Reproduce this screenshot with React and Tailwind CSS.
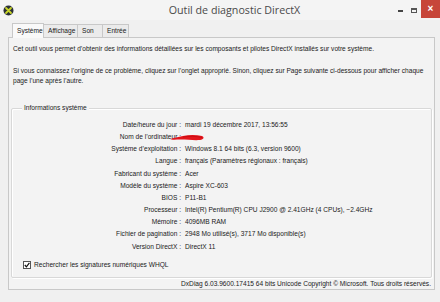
import React from 'react';

const rows = [
  ['Date/heure du jour :', 'mardi 19 décembre 2017, 13:56:55'],
  ['Nom de l\u2019ordinateur :', ''],
  ['Système d\u2019exploitation :', 'Windows 8.1 64 bits (6.3, version 9600)'],
  ['Langue :', 'français (Paramètres régionaux : français)'],
  ['Fabricant du système :', 'Acer'],
  ['Modèle du système :', 'Aspire XC-603'],
  ['BIOS :', 'P11-B1'],
  ['Processeur :', 'Intel(R) Pentium(R) CPU J2900 @ 2.41GHz (4 CPUs), ~2.4GHz'],
  ['Mémoire :', '4096MB RAM'],
  ['Fichier de pagination :', '2948 Mo utilisé(s), 3717 Mo disponible(s)'],
  ['Version DirectX :', 'DirectX 11'],
];

const tabs = ['Système', 'Affichage', 'Son', 'Entrée'];

const DxIcon = () => (
  <svg width="11" height="11" viewBox="0 0 11 11">
    <circle cx="5.5" cy="5.5" r="5" fill="#2b3036" />
    <path d="M3 3 L8 8 M8 3 L3 8" stroke="#c9d62a" strokeWidth="1.8" strokeLinecap="round" />
  </svg>
);

// red marker stroke hiding the computer name
const Scribble = () => (
  <svg width="36" height="9" viewBox="0 0 36 9" className="absolute left-[157px] top-[2px]">
    <path d="M1 6 C5 5, 9 4, 14 3 C20 1.5, 27 1.5, 33 3 C35.5 4, 35 6.5, 31 7 C25 7.5, 18 6.5, 12 6.5 C7 6.5, 3 7.2, 1 6 Z" fill="#e3151c" />
    <path d="M14 4 C20 3, 27 3, 33 4.5" stroke="#c80d12" strokeWidth="1" fill="none" />
  </svg>
);

export default function App() {
  return (
    <div
      className="w-[440px] h-[302px] bg-[#f0f0f0] flex flex-col overflow-hidden text-[#1a1a1a]"
      style={{ fontFamily: '"Liberation Sans", Arial, sans-serif' }}
    >
      {/* Title bar */}
      <div className="h-[20px] bg-[#f4f4f4] flex items-center relative shrink-0">
        <div className="pl-[3px] pt-[1px]">
          <DxIcon />
        </div>
        <div
          className="flex-1 text-center text-[10.7px] text-[#4a4a4a] pl-[62px] leading-none"
          style={{ fontFamily: '"Open Sans", "Noto Sans", sans-serif' }}
        >
          Outil de diagnostic DirectX
        </div>
        <div className="flex items-start h-full">
          <div className="w-[14px] h-full flex items-center justify-center">
            <div className="w-[5px] h-[2px] bg-[#444] mt-[2px]" />
          </div>
          <div className="w-[14px] h-full flex items-center justify-center">
            <div className="w-[6px] h-[5px] border border-[#555] border-t-2" />
          </div>
          <div className="w-[19px] h-[18px] bg-[#c7463a] flex items-center justify-center text-white text-[10px] font-bold leading-none">
            ×
          </div>
        </div>
      </div>

      {/* Tabs */}
      <div className="flex pl-[12px] mt-[3px] h-[14px] text-[6.6px] relative z-10">
        {tabs.map((t, i) => (
          <div
            key={t}
            className={
              i === 0
                ? 'h-[15px] px-[4px] bg-[#f9f9f9] border border-[#c8c8c8] border-b-0 flex items-center'
                : 'h-[14px] mt-[1px] px-[4px] bg-[#ebebeb] border border-l-0 border-[#c8c8c8] flex items-center'
            }
            style={{ width: [32, 34, 25, 26][i] }}
          >
            {t}
          </div>
        ))}
      </div>

      {/* Panel */}
      <div className="ml-[8px] mr-[5px] h-[253px] border border-[#c8c8c8] bg-[#f3f3f3] text-[6.6px] leading-[10px] flex flex-col">
        <p className="pl-[4px] mt-[6px]">
          Cet outil vous permet d&#8217;obtenir des informations détaillées sur les composants et pilotes DirectX installés sur votre système.
        </p>
        <p className="pl-[4px] pr-[4px] mt-[12px]">
          Si vous connaissez l&#8217;origine de ce problème, cliquez sur l&#8217;onglet approprié. Sinon, cliquez sur Page suivante ci-dessous pour afficher chaque page l&#8217;une après l&#8217;autre.
        </p>

        {/* Group box */}
        <div className="relative mx-[2px] mt-[22px] h-[171px] border border-[#d8d8d8] rounded-[2px] shadow-[inset_1px_1px_0_#fff,1px_1px_0_#fff]">
          <div className="absolute left-[10px] top-[-6px] px-[2px] bg-[#f3f3f3] leading-[10px]">
            Informations système
          </div>
          <div className="mt-[10px] flex flex-col">
            {rows.map(([label, value], i) => (
              <div key={i} className="flex h-[12.2px] items-center leading-none relative">
                <div className="w-[171px] text-right pr-[2px] shrink-0">
                  {label}
                </div>
                <div className="pl-[2px]">{value}</div>
                {i === 1 && <Scribble />}
              </div>
            ))}
          </div>
          <div className="absolute left-[11px] bottom-[8px] flex items-center gap-[3px] leading-none">
            <div className="w-[8px] h-[8px] border border-[#555] bg-white flex items-center justify-center">
              <svg width="6" height="6" viewBox="0 0 6 6">
                <path d="M0.8 3 L2.4 4.8 L5.4 0.8" stroke="#111" strokeWidth="1.2" fill="none" />
              </svg>
            </div>
            <span>Rechercher les signatures numériques WHQL</span>
          </div>
        </div>

        <div className="text-right pr-[3px] mt-[1px] leading-[10px]">
          DxDiag 6.03.9600.17415 64 bits Unicode Copyright © Microsoft. Tous droits réservés.
        </div>
      </div>
    </div>
  );
}
